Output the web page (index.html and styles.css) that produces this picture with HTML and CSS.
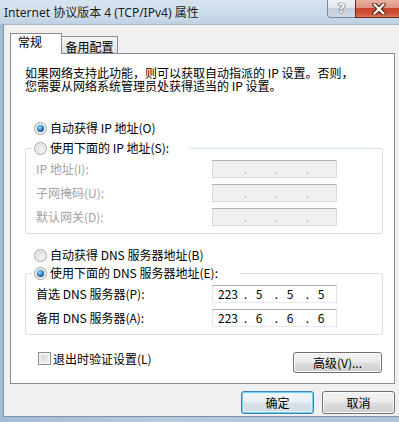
FILE: index.html
```html
<!DOCTYPE html>
<html lang="zh-CN">
  <head>
    <meta charset="UTF-8" />
    <title>Internet 协议版本 4 (TCP/IPv4) 属性</title>
    <link rel="stylesheet" href="styles.css">
  </head>
  <body>
    <div class="window">
      <div class="titlebar">
        <div class="title">Internet 协议版本 4 (TCP/IPv4) 属性</div>
        <div class="cap-help">?</div>
        <div class="cap-close">
          <svg width="14" height="12" viewBox="0 0 14 12">
            <path d="M2.5 1.5 L11.5 10.5 M11.5 1.5 L2.5 10.5" stroke="#4a1e16" stroke-width="4.4" stroke-linecap="round" fill="none" />
            <path d="M2.5 1.5 L11.5 10.5 M11.5 1.5 L2.5 10.5" stroke="#ffffff" stroke-width="2.4" stroke-linecap="round" fill="none" />
          </svg>
        </div>
      </div>

      <div class="client">
        <div class="tabs">
          <div class="tab tab-active">常规</div>
          <div class="tab">备用配置</div>
        </div>

        <div class="panel">
          <div class="intro">
            <div class="intro-line">如果网络支持此功能，则可以获取自动指派的 IP 设置。否则，</div>
            <div class="intro-line">您需要从网络系统管理员处获得适当的 IP 设置。</div>
          </div>

          <div class="radio-row top-radio">
            <span class="radio radio-on"></span>
            <span>自动获得 IP 地址(O)</span>
          </div>

          <div class="group group-ip">
            <div class="legend legend-ip">
              <span class="radio"></span>
              <span>使用下面的 IP 地址(S):</span>
            </div>
            <div class="rows">
              <div class="field-label disabled">IP 地址(I):</div>
              <div class="ipbox ipbox-off">
                <span class="seg"></span><span class="dot">.</span><span class="seg"></span><span class="dot">.</span><span class="seg"></span><span class="dot">.</span><span class="seg"></span>
              </div>
              <div class="field-label disabled">子网掩码(U):</div>
              <div class="ipbox ipbox-off">
                <span class="seg"></span><span class="dot">.</span><span class="seg"></span><span class="dot">.</span><span class="seg"></span><span class="dot">.</span><span class="seg"></span>
              </div>
              <div class="field-label disabled">默认网关(D):</div>
              <div class="ipbox ipbox-off">
                <span class="seg"></span><span class="dot">.</span><span class="seg"></span><span class="dot">.</span><span class="seg"></span><span class="dot">.</span><span class="seg"></span>
              </div>
            </div>
          </div>

          <div class="radio-row dns-radio">
            <span class="radio"></span>
            <span>自动获得 DNS 服务器地址(B)</span>
          </div>

          <div class="group group-dns">
            <div class="legend legend-dns">
              <span class="radio radio-on"></span>
              <span>使用下面的 DNS 服务器地址(E):</span>
            </div>
            <div class="rows">
              <div class="field-label">首选 DNS 服务器(P):</div>
              <div class="ipbox">
                <span class="seg">223</span><span class="dot">.</span><span class="seg">5</span><span class="dot">.</span><span class="seg">5</span><span class="dot">.</span><span class="seg">5</span>
              </div>
              <div class="field-label">备用 DNS 服务器(A):</div>
              <div class="ipbox">
                <span class="seg">223</span><span class="dot">.</span><span class="seg">6</span><span class="dot">.</span><span class="seg">6</span><span class="dot">.</span><span class="seg">6</span>
              </div>
            </div>
          </div>

          <div class="options">
            <label class="check-row">
              <span class="checkbox"></span>
              <span>退出时验证设置(L)</span>
            </label>
            <button class="btn btn-advanced">高级(V)...</button>
          </div>
        </div>

        <div class="actions">
          <button class="btn btn-default">确定</button>
          <button class="btn">取消</button>
        </div>
      </div>
    </div>
  </body>
</html>
```

FILE: styles.css
```css
body {
  margin: 0;
  width: 399px;
  height: 422px;
  overflow: hidden;
  font-family: "Noto Sans CJK SC", "Noto Sans", sans-serif;
  font-size: 12px;
  color: #000;
}
.window {
  height: 422px;
  display: flex;
  flex-direction: column;
  background: linear-gradient(90deg, #a3bbd4 0%, #b6cade 40%, #aec4da 100%);
}
.titlebar {
  height: 24px;
  display: flex;
  align-items: flex-start;
  background: linear-gradient(180deg, #d6e3ef 0%, #cbdbea 55%, #bed1e4 100%);
}
.title {
  flex: 1;
  padding: 5px 0 0 4px;
  line-height: 16px;
  font-family: "Noto Sans", "Noto Sans CJK SC", sans-serif;
  font-size: 12px;
  color: #1b1b1b;
  text-shadow: 0 0 6px #eef4fa;
}
.cap-help {
  width: 28px;
  height: 18px;
  box-sizing: border-box;
  border: 1px solid #7a8a9e;
  border-top: none;
  border-right: none;
  border-radius: 0 0 0 4px;
  background: linear-gradient(180deg, #eef2f7 0%, #dfe6ee 45%, #c3ceda 50%, #cfd9e4 100%);
  text-align: center;
  font-family: "DejaVu Sans", sans-serif;
  font-weight: bold;
  font-size: 14px;
  line-height: 17px;
  color: #f4f6f8;
  text-shadow: 0 0 1px #4c5663, 0 0 1px #4c5663, 0 0 1px #4c5663;
}
.cap-close {
  width: 44px;
  height: 18px;
  box-sizing: border-box;
  border: 1px solid #6b2a1f;
  border-top: none;
  border-right: none;
  background: linear-gradient(180deg, #eab0a2 0%, #de9481 45%, #c8442d 50%, #cf4f36 80%, #dc7a60 100%);
  display: flex;
  align-items: center;
  justify-content: center;
  padding-left: 2px;
}

.client {
  height: 393px;
  box-sizing: border-box;
  margin-left: 3px;
  border-left: 1px solid #7f93a8;
  border-top: 1px solid #a9b9ca;
  border-bottom: 1px solid #7f93a8;
  background: #f0f0f0;
  padding: 8px 4px 0 6px;
}

/* tabs */
.tabs {
  height: 20px;
  display: flex;
  align-items: flex-end;
}
.tab {
  height: 17px;
  box-sizing: border-box;
  width: 57px;
  margin-left: -1px;
  padding-top: 3px;
  border: 1px solid #898c95;
  border-bottom: none;
  background: linear-gradient(180deg, #f5f5f5 0%, #ebebeb 50%, #dedede 100%);
  text-align: center;
  line-height: 13px;
}
.tab-active {
  position: relative;
  z-index: 1;
  width: 52px;
  height: 21px;
  margin: 0 0 -1px 0;
  padding: 1px 0 0 7px;
  text-align: left;
  background: #fff;
}

.panel {
  height: 331px;
  box-sizing: border-box;
  border: 1px solid #898c95;
  background: #fff;
  display: flex;
  flex-direction: column;
}
.intro {
  margin: 12px 0 0 14px;
}
.intro-line {
  height: 13px;
  line-height: 13px;
  white-space: nowrap;
}

.radio-row {
  height: 16px;
  display: flex;
  align-items: center;
  gap: 3px;
  line-height: 16px;
}
.top-radio {
  margin: 28px 0 0 23px;
}
.dns-radio {
  margin: 13px 0 0 23px;
}
.radio {
  width: 13px;
  height: 13px;
  box-sizing: border-box;
  border-radius: 50%;
  border: 1px solid #a3a3a3;
  background: radial-gradient(circle at 60% 65%, #f7f7f7 0%, #e4e4e4 45%, #c9c9c9 100%);
  box-shadow: inset 0 0 0 1px #f4f4f4;
  display: flex;
  align-items: center;
  justify-content: center;
  flex: none;
}
.radio-on::after {
  content: "";
  width: 7px;
  height: 7px;
  border-radius: 50%;
  background: radial-gradient(circle at 40% 35%, #9ae1fb 0%, #3a8fd6 40%, #1a4d8c 75%, #123a6c 100%);
}

.group {
  border: 1px solid #d5dfe5;
  border-radius: 3px;
  padding-bottom: 7px;
}
.group-ip {
  margin: 12px 11px 0 14px;
}
.group-dns {
  margin: 10px 11px 0 14px;
}
.legend {
  width: fit-content;
  height: 16px;
  margin: -9px 0 0 6px;
  padding: 0 20px 0 2px;
  background: #fff;
  display: flex;
  align-items: center;
  gap: 3px;
  line-height: 16px;
}
.legend-dns {
  padding-right: 22px;
}
.rows {
  margin-top: 4px;
  padding-left: 10px;
  display: grid;
  grid-template-columns: 176px 125px;
  row-gap: 6px;
}
.field-label {
  line-height: 18px;
  white-space: nowrap;
}
.disabled {
  color: #a2a2a2;
}
.ipbox {
  height: 18px;
  box-sizing: border-box;
  border: 1px solid;
  border-color: #abadb3 #e2e3ea #e3e9ef #e2e3ea;
  padding-left: 3px;
  display: flex;
  line-height: 16px;
  background: #fff;
}
.ipbox-off {
  background: #f0f0f0;
  border-color: #b3b3b3 #dadada #dadada #dadada;
  color: #b0b0b0;
}
.seg {
  width: 24px;
  text-align: center;
}
.dot {
  width: 7px;
  text-align: right;
}

.options {
  margin: 17px 12px 0 27px;
  display: flex;
  justify-content: space-between;
  align-items: flex-start;
}
.check-row {
  display: flex;
  align-items: center;
  gap: 2px;
  line-height: 13px;
}
.checkbox {
  width: 13px;
  height: 13px;
  box-sizing: border-box;
  border: 1px solid #8f8f8f;
  background: linear-gradient(135deg, #cfcfcf 0%, #e6e6e6 60%, #f4f4f4 100%);
  box-shadow: inset 0 0 0 2px #f3f3f3;
}

.btn {
  height: 23px;
  width: 73px;
  box-sizing: border-box;
  border: 1px solid #707070;
  border-radius: 3px;
  background: linear-gradient(180deg, #f2f2f2 0%, #ebebeb 48%, #dddddd 52%, #cfcfcf 100%);
  box-shadow: inset 0 0 0 1px #fcfcfc;
  font-family: "Noto Sans CJK SC", "Noto Sans", sans-serif;
  font-size: 12px;
  color: #000;
  padding: 0;
  line-height: 19px;
}
.btn-advanced {
  width: 89px;
  height: 21px;
  line-height: 17px;
}
.btn-default {
  border-color: #3c7fb1;
  box-shadow: inset 0 0 0 1px #6fd2f5, inset 0 0 0 2px #e3f3fb;
  background: linear-gradient(180deg, #f3f7fa 0%, #e9eff3 48%, #d9e2e9 52%, #cfdbe4 100%);
}
.actions {
  margin-top: 7px;
  display: flex;
  justify-content: flex-end;
  gap: 8px;
}
```
